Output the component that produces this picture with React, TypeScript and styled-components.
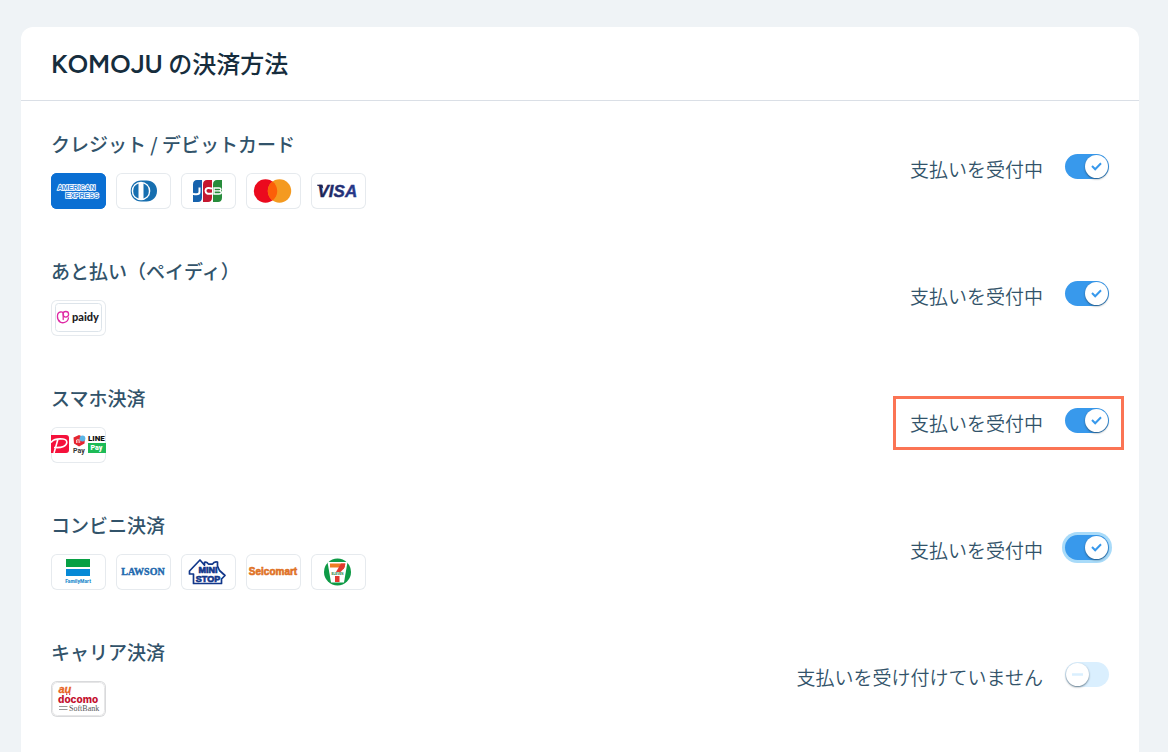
import React, { useState } from "react";
import styled, { createGlobalStyle } from "styled-components";

const GlobalStyle = createGlobalStyle`
  *, *::before, *::after { box-sizing: border-box; }
  body {
    margin: 0;
    background: #eff3f6;
    font-family: "Noto Sans CJK JP", sans-serif;
    color: #32536a;
  }
`;

const Page = styled.div`
  display: flex;
  flex-direction: column;
  min-height: 100vh;
  padding: 27px 29px 0 21px;
`;

const Card = styled.main`
  flex: 1;
  background: #fff;
  border-radius: 12px 12px 0 0;
`;

const CardHeader = styled.header`
  padding: 18px 30px 19px;
  border-bottom: 1px solid #dadfe6;
`;

const Heading = styled.h1`
  margin: 0;
  font-size: 24px;
  line-height: 36px;
  font-weight: 500;
  color: #162d3d;
`;

const BrandName = styled.span`
  font-family: Figtree, Inter, sans-serif;
  font-size: 26px;
  line-height: 1;
  font-weight: 600;
`;

const MethodList = styled.ul`
  display: flex;
  flex-direction: column;
  gap: 48px;
  margin: 0;
  padding: 29px 30px 35px;
  list-style: none;
`;

const MethodRow = styled.li`
  display: flex;
  align-items: center;
  justify-content: space-between;
`;

const MethodTitle = styled.h2`
  margin: 0 0 15px;
  font-size: 19px;
  line-height: 28px;
  font-weight: 500;
`;

const Brands = styled.div`
  display: flex;
  gap: 10px;
`;

const Badge = styled.svg<{ $edge?: string }>`
  display: block;
  width: 55px;
  height: 36px;
  border-radius: 6px;
  box-shadow: inset 0 0 0 1px ${(p) => p.$edge ?? "#e6eaee"};
  overflow: hidden;
`;

const Status = styled.div<{ $framed?: boolean }>`
  position: relative;
  display: flex;
  align-items: center;
  gap: 22px;
  padding-bottom: 2px;

  &::after {
    content: "";
    display: ${(p) => (p.$framed ? "block" : "none")};
    position: absolute;
    inset: -12px -15px -11px -17px;
    border: 3px solid #fb7454;
    pointer-events: none;
  }
`;

const StatusLabel = styled.label`
  font-size: 19px;
  line-height: 28px;
  font-weight: 350;
`;

const Switch = styled.span`
  display: grid;
  margin-bottom: 4px;

  > * {
    grid-area: 1 / 1;
  }
`;

const SwitchInput = styled.input<{ $ring?: boolean }>`
  appearance: none;
  width: 44px;
  height: 25px;
  margin: 0;
  border-radius: 13px;
  background: #daeffe;
  box-shadow: ${(p) => (p.$ring ? "0 0 0 3px #a9dbf9" : "none")};
  cursor: pointer;

  &:checked {
    background: #3899ec;
  }
`;

const Knob = styled.svg<{ $on: boolean }>`
  align-self: center;
  justify-self: ${(p) => (p.$on ? "end" : "start")};
  width: 23px;
  height: 23px;
  margin: 0 1px;
  border-radius: 50%;
  background: #fff;
  box-shadow: 0 1px 2px rgba(22, 45, 61, 0.6);
  pointer-events: none;
`;

const sans = '"Liberation Sans", sans-serif';
const serif = '"Liberation Serif", serif';

function Logo({ name, edge, children }: { name: string; edge?: string; children: React.ReactNode }) {
  return (
    <Badge $edge={edge} viewBox="0 0 55 36" role="img" aria-label={name}>
      {children}
    </Badge>
  );
}

const Amex = () => (
  <Logo name="American Express" edge="#0b6cd0">
    <rect width="55" height="36" fill="#0a6fd3" />
    <g fontFamily={sans} fontWeight="700" fontSize="7" fill="#2f86dc" stroke="#fff" strokeWidth="1.7" paintOrder="stroke">
      <text x="6.500" y="16.500">AMERICAN</text>
      <text x="14.500" y="25">EXPRESS</text>
    </g>
  </Logo>
);

const Diners = () => (
  <Logo name="Diners Club">
    <path d="M25 7.500h5.500C37 7.500 41 12 41 18s-4.500 10.500-10.500 10.500H25C19 28.500 14.700 24 14.700 18S19 7.500 25 7.500Z" fill="#176fb0" />
    <circle cx="25" cy="18" r="9.300" fill="#fff" />
    <path d="M22.500 10.600a7.800 7.800 0 0 0 0 14.800ZM27.500 10.600a7.800 7.800 0 0 1 0 14.800Z" fill="#176fb0" />
  </Logo>
);

const Jcb = () => (
  <Logo name="JCB">
    <path d="M12 11.500c0-3 1.500-4.500 4-4.500h5v17.500c0 3-1.500 4.500-4 4.500h-5Z" fill="#1662ad" />
    <path d="M22 11.500c0-3 1.500-4.500 4-4.500h5v17.500c0 3-1.500 4.500-4 4.500h-5Z" fill="#c4172f" />
    <path d="M32 11.500c0-3 1.500-4.500 4-4.500h5v17.500c0 3-1.500 4.500-4 4.500h-5Z" fill="#278c3b" />
    <path d="M18.500 14.500v4.500q0 2.300-3 2.300-2 0-3.500-.6M31 15.600q-6.500-1.800-6.500 2.200t6.500 2.600" fill="none" stroke="#fff" strokeWidth="2" />
    <path d="M33 15h5q2 0 2 1.400t-2 1.500q2.300.1 2.300 1.600t-2.300 1.500h-5Zm0 2.900h5" fill="none" stroke="#fff" strokeWidth="1.400" />
  </Logo>
);

const Mastercard = () => (
  <Logo name="Mastercard">
    <circle cx="19.500" cy="18" r="11.700" fill="#eb0a1e" />
    <circle cx="33.500" cy="18" r="11.700" fill="#f49a20" />
    <path d="M26.500 8.600a11.700 11.700 0 0 1 0 18.800 11.700 11.700 0 0 1 0-18.800Z" fill="#fc5f08" />
  </Logo>
);

const Visa = () => (
  <Logo name="Visa">
    <defs>
      <linearGradient id="visa" x1="0" x2="1">
        <stop offset="0" stopColor="#1c2152" />
        <stop offset="1" stopColor="#283a8e" />
      </linearGradient>
    </defs>
    <path d="M6 11.800h5.500l.8 3.700Q9.500 12.900 6 12.400Z" fill="#1c2152" />
    <text x="6.500" y="24" fontFamily={sans} fontWeight="700" fontStyle="italic" fontSize="17" fill="url(#visa)" stroke="url(#visa)" strokeWidth=".4">
      VISA
    </text>
  </Logo>
);

const Paidy = () => (
  <Logo name="Paidy">
    <rect x="4.500" y="3.500" width="46" height="28" rx="3" fill="none" stroke="#dde4ea" />
    <g fill="none" stroke="#df2aa5" strokeWidth="1.300" strokeLinecap="round">
      <path d="M9 21.500c-3.500-2-3.500-9 .5-9.500 2.500-.3 3 1 3 3.500" />
      <circle cx="14.800" cy="14.300" r="2.800" />
      <path d="M7.500 20.500c2 3.500 9 3 10-2.500M12.200 16v3.500" />
    </g>
    <text x="21" y="21" fontFamily="Lato, sans-serif" fontWeight="900" fontSize="11" fill="#1d1d1f">paidy</text>
  </Logo>
);

const SmartphonePay = () => (
  <Logo name="PayPay, Merpay, LINE Pay">
    <path d="M0 8h15q3 0 3 3v12q0 3-3 3H0Z" fill="#f5113b" />
    <path d="M0 15.500C2 12.500 7 11.500 12 12c5 .5 5 5.500.5 7.500-3 1.300-7 1.200-9.500 1M7 12 3 26" fill="none" stroke="#fff" strokeWidth="1.600" />
    <path d="m22.500 10.500 5.500-2.500 6 2.800-.5 5.700-5.500 3-5-3Z" fill="#e5252f" />
    <circle cx="31.500" cy="11.500" r="2.900" fill="#5cb5e6" />
    <path d="M25.500 16v-3q1.500-1.200 1.500.5V16m0-3q1.700-1 1.700.5V16" fill="none" stroke="#fff" strokeWidth=".7" />
    <g fontFamily="Roboto, sans-serif" fontSize="7">
      <text x="22" y="25.500" fontWeight="700" fill="#333">Pay</text>
      <text x="37" y="14" fontWeight="900" fontSize="8" fill="#111">LINE</text>
      <rect x="37" y="16" width="18" height="10" fill="#1dbb57" />
      <text x="39.500" y="23" fontWeight="900" fill="#fff">Pay</text>
    </g>
  </Logo>
);

const FamilyMart = () => (
  <Logo name="FamilyMart">
    <rect x="15" y="5" width="24" height="8" fill="#07a045" />
    <rect x="15" y="15" width="24" height="7" fill="#0689d6" />
    <text x="27" y="28.500" textAnchor="middle" fontFamily="Roboto, sans-serif" fontWeight="900" fontSize="5" fill="#2c8fce">
      FamilyMart
    </text>
  </Logo>
);

const Lawson = () => (
  <Logo name="Lawson">
    <text x="27" y="21" textAnchor="middle" fontFamily={serif} fontWeight="700" fontSize="10" fill="#2269ae" stroke="#2269ae" strokeWidth=".4">
      LAWSON
    </text>
  </Logo>
);

const Ministop = () => (
  <Logo name="Ministop">
    <path d="M12.500 29.500V20H8.500v-3L19 6l4.500 5.200V8.300q2.500-1 4 1.800h4q1.500-2.800 5-2v4l2 4.400 5.500 5-3.500 3.500v4.500Z" fill="#fff" stroke="#12378a" strokeWidth="1.700" strokeLinejoin="round" />
    <g fontFamily={sans} fontWeight="700" fontSize="9" fill="#12378a" stroke="#12378a" strokeWidth=".7" textAnchor="middle">
      <text x="27" y="18.500">MINI</text>
      <text x="27" y="27.500">STOP</text>
    </g>
  </Logo>
);

const Seicomart = () => (
  <Logo name="Seicomart">
    <text x="27" y="21" textAnchor="middle" fontFamily={sans} fontWeight="700" fontSize="10" fill="#df7226" stroke="#df7226" strokeWidth=".6">
      Seicomart
    </text>
  </Logo>
);

const SevenEleven = () => (
  <Logo name="Seven Eleven">
    <circle cx="26.500" cy="18" r="13.500" fill="#0e9a46" />
    <path d="M16.500 8h20l-3.500 20.500H20Z" fill="#fff" />
    <path d="M19 9.500h15v4h-15Z" fill="#ee7d23" />
    <path d="M30 9.500h4.500L33 14.500 29.500 18H25Z" fill="#e2392f" />
    <path d="M24 22h4.500V28H24Z" fill="#e2392f" />
    <text x="26.500" y="21.300" textAnchor="middle" fontFamily={sans} fontWeight="700" fontSize="3" fill="#0e7d3b">ELEVEN</text>
  </Logo>
);

const Carriers = () => (
  <Logo name="au, docomo, SoftBank" edge="#d9dadc">
    <rect x="1.500" y="1.500" width="52" height="33" rx="5" fill="none" stroke="#e6e6e7" />
    <text x="7.500" y="11.500" fontFamily={sans} fontWeight="700" fontStyle="italic" fontSize="11" fill="#e8641f" stroke="#e8641f" strokeWidth=".3">au</text>
    <text x="7" y="21.500" fontFamily="Inter, sans-serif" fontWeight="800" fontSize="10" fill="#c4122f">docomo</text>
    <path d="M15 13.200h1.300M18 13.200h1.300" stroke="#c4122f" strokeWidth="1.200" />
    <path d="M8 25.500h8.500M8 28.500h8.500" stroke="#999" strokeWidth="1.200" />
    <text x="18" y="29.500" fontFamily={serif} fontSize="8" fill="#555">SoftBank</text>
  </Logo>
);

interface Method {
  id: string;
  title: string;
  brands: React.FC[];
  on: boolean;
  framed?: boolean;
  ring?: boolean;
}

const methods: Method[] = [
  { id: "card", title: "クレジット / デビットカード", brands: [Amex, Diners, Jcb, Mastercard, Visa], on: true },
  { id: "paidy", title: "あと払い（ペイディ）", brands: [Paidy], on: true },
  { id: "smartphone", title: "スマホ決済", brands: [SmartphonePay], on: true, framed: true },
  { id: "konbini", title: "コンビニ決済", brands: [FamilyMart, Lawson, Ministop, Seicomart, SevenEleven], on: true, ring: true },
  { id: "carrier", title: "キャリア決済", brands: [Carriers], on: false },
];

function PaymentMethod({ method }: { method: Method }) {
  const [on, setOn] = useState(method.on);
  return (
    <MethodRow>
      <div>
        <MethodTitle>{method.title}</MethodTitle>
        <Brands>
          {method.brands.map((Brand, i) => (
            <Brand key={i} />
          ))}
        </Brands>
      </div>
      <Status $framed={method.framed}>
        <StatusLabel htmlFor={method.id}>{on ? "支払いを受付中" : "支払いを受け付けていません"}</StatusLabel>
        <Switch>
          <SwitchInput
            id={method.id}
            type="checkbox"
            role="switch"
            $ring={method.ring}
            checked={on}
            onChange={(e) => setOn(e.target.checked)}
          />
          <Knob $on={on} viewBox="0 0 23 23" aria-hidden="true">
            {on ? (
              <path d="m7 11 3.200 3.300 5.800-6" fill="none" stroke="#3899ec" strokeWidth="2" />
            ) : (
              <path d="M6 11.500h11" stroke="#daeffe" strokeWidth="2.500" />
            )}
          </Knob>
        </Switch>
      </Status>
    </MethodRow>
  );
}

export default function App() {
  return (
    <>
      <GlobalStyle />
      <Page>
        <Card>
          <CardHeader>
            <Heading>
              <BrandName>KOMOJU</BrandName> の決済方法
            </Heading>
          </CardHeader>
          <MethodList>
            {methods.map((m) => (
              <PaymentMethod key={m.id} method={m} />
            ))}
          </MethodList>
        </Card>
      </Page>
    </>
  );
}
